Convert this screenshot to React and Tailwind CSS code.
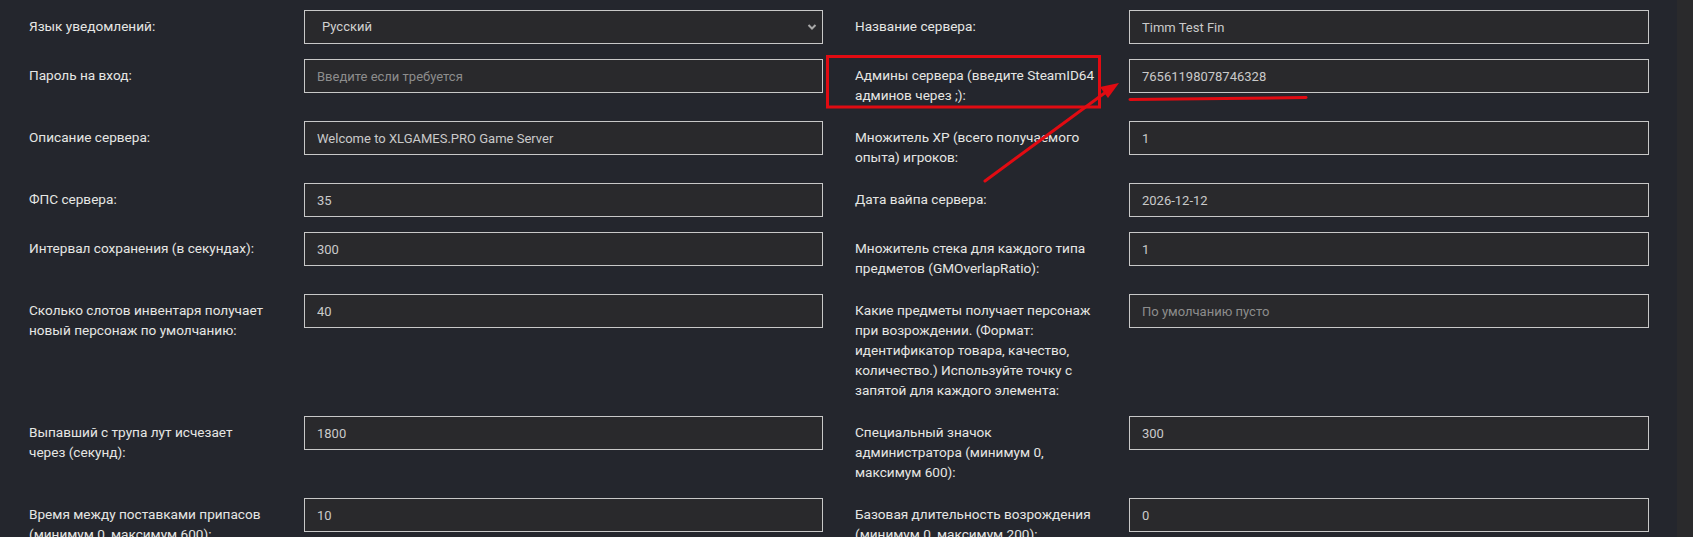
import React from "react";

const rows = [
  {
    l: ["Язык уведомлений:"],
    lv: { select: "Русский" },
    r: ["Название сервера:"],
    rv: { value: "Timm Test Fin" },
  },
  {
    l: ["Пароль на вход:"],
    lv: { placeholder: "Введите если требуется" },
    r: ["Админы сервера (введите SteamID64", "админов через ;):"],
    rv: { value: "76561198078746328" },
  },
  {
    l: ["Описание сервера:"],
    lv: { value: "Welcome to XLGAMES.PRO Game Server" },
    r: ["Множитель XP (всего получаемого", "опыта) игроков:"],
    rv: { value: "1" },
  },
  {
    l: ["ФПС сервера:"],
    lv: { value: "35" },
    r: ["Дата вайпа сервера:"],
    rv: { value: "2026-12-12" },
  },
  {
    l: ["Интервал сохранения (в секундах):"],
    lv: { value: "300" },
    r: ["Множитель стека для каждого типа", "предметов (GMOverlapRatio):"],
    rv: { value: "1" },
  },
  {
    l: ["Сколько слотов инвентаря получает", "новый персонаж по умолчанию:"],
    lv: { value: "40" },
    r: [
      "Какие предметы получает персонаж",
      "при возрождении. (Формат:",
      "идентификатор товара, качество,",
      "количество.) Используйте точку с",
      "запятой для каждого элемента:",
    ],
    rv: { placeholder: "По умолчанию пусто" },
  },
  {
    l: ["Выпавший с трупа лут исчезает", "через (секунд):"],
    lv: { value: "1800" },
    r: ["Специальный значок", "администратора (минимум 0,", "максимум 600):"],
    rv: { value: "300" },
  },
  {
    l: ["Время между поставками припасов", "(минимум 0, максимум 600):"],
    lv: { value: "10" },
    r: ["Базовая длительность возрождения", "(минимум 0, максимум 200):"],
    rv: { value: "0" },
  },
];

function Label({ lines, width }) {
  return (
    <div className={`${width} shrink-0 pt-[6px] pb-[1px] text-[13.6px] leading-[20px] text-[#e6e6e4]`}>
      {lines.map((t, i) => (
        <div key={i} className="whitespace-nowrap">
          {t}
        </div>
      ))}
    </div>
  );
}

function Field({ cfg, width }) {
  if (cfg.select) {
    return (
      <div
        className={`${width} shrink-0 h-[34px] border border-[#c8c8c8] bg-[#29292c] flex items-center justify-between pl-[17px] pr-[5px] text-[13px] text-[#d2d2d2]`}
      >
        <span>{cfg.select}</span>
        <svg width="10" height="8" viewBox="0 0 10 8">
          <path d="M1.5 2 L5 5.5 L8.5 2" fill="none" stroke="#a8a8a8" strokeWidth="2" />
        </svg>
      </div>
    );
  }
  return (
    <input
      readOnly
      value={cfg.value ?? ""}
      placeholder={cfg.placeholder}
      className={`${width} shrink-0 h-[34px] border border-[#c8c8c8] bg-[#29292c] pl-[12px] text-[13px] text-[#cacaca] placeholder:text-[#8d8d8d] outline-none`}
      style={{ fontFamily: "Roboto, 'Liberation Sans', sans-serif" }}
    />
  );
}

export default function App() {
  return (
    <div
      className="relative flex h-[537px] w-full overflow-hidden bg-[#24262d]"
      style={{ fontFamily: "Roboto, 'Liberation Sans', sans-serif" }}
    >
      <div className="flex-1 pl-[29px] pt-[10px]">
        {rows.map((row, i) => (
          <div key={i} className="flex items-start mb-[15px]">
            <Label lines={row.l} width="w-[275px]" />
            <Field cfg={row.lv} width="w-[519px]" />
            <div className="w-[32px] shrink-0" />
            <Label lines={row.r} width="w-[274px]" />
            <Field cfg={row.rv} width="w-[520px]" />
          </div>
        ))}
      </div>
      <div className="w-[16px] shrink-0 bg-[#2a2a2c]" />

      <svg
        className="pointer-events-none absolute left-0 top-0"
        width="1693"
        height="537"
        viewBox="0 0 1693 537"
      >
        <rect x="827.5" y="56.5" width="272" height="50.5" fill="none" stroke="#e10b12" strokeWidth="3" />
        <path d="M1130 99.5 L1306 97.5" fill="none" stroke="#e10b12" strokeWidth="3" strokeLinecap="round" />
        <path d="M985 181 L1106 92" fill="none" stroke="#e10b12" strokeWidth="3" strokeLinecap="round" />
        <path d="M1119 83 L1100 87 L1108 98 Z" fill="#e10b12" />
      </svg>
    </div>
  );
}
